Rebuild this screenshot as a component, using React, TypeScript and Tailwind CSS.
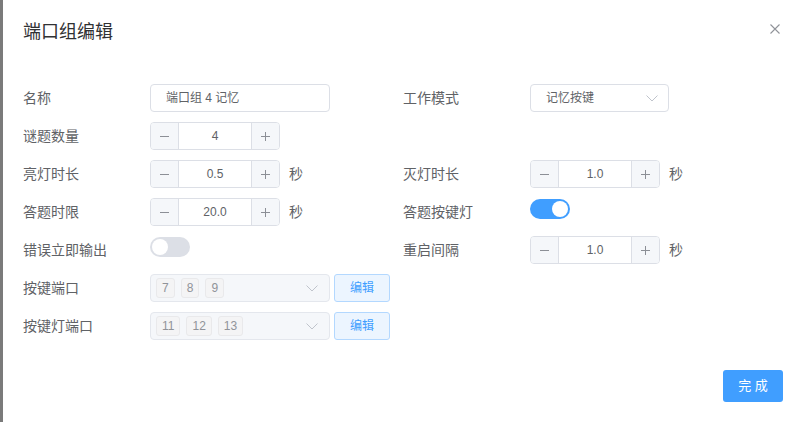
const Label = ({ children }: { children: React.ReactNode }) => (
  <div className="w-[127px] shrink-0 text-[14px] text-[#606266] leading-[28px]">{children}</div>
);

const NumberInput = ({ value }: { value: string }) => (
  <div className="flex h-[28px] w-[130px] rounded-[4px] border border-[#dcdfe6] overflow-hidden">
    <div className="w-[28px] shrink-0 bg-[#f5f7fa] border-r border-[#dcdfe6] flex items-center justify-center">
      <svg width="9" height="9" viewBox="0 0 9 9">
        <path d="M0 4.5h9" stroke="#8c8f96" strokeWidth="1" />
      </svg>
    </div>
    <div className="flex-1 flex items-center justify-center text-[12px] text-[#606266]">{value}</div>
    <div className="w-[28px] shrink-0 bg-[#f5f7fa] border-l border-[#dcdfe6] flex items-center justify-center">
      <svg width="9" height="9" viewBox="0 0 9 9">
        <path d="M0 4.5h9M4.5 0v9" stroke="#8c8f96" strokeWidth="1" />
      </svg>
    </div>
  </div>
);

const Unit = () => <span className="ml-[9px] text-[14px] text-[#606266]">秒</span>;

const Chevron = ({ color }: { color: string }) => (
  <svg width="12" height="7" viewBox="0 0 12 7" fill="none">
    <path d="M0.5 0.5L6 6L11.5 0.5" stroke={color} strokeWidth="1" />
  </svg>
);

const Switch = ({ on }: { on: boolean }) => (
  <div
    className={`mt-[1px] h-[20px] w-[40px] rounded-full p-[2px] flex ${
      on ? "bg-[#409eff] justify-end" : "bg-[#dcdfe6] justify-start"
    }`}
  >
    <div className="h-[16px] w-[16px] rounded-full bg-white" />
  </div>
);

const Tag = ({ n }: { n: string }) => (
  <span className="h-[20px] px-[5px] rounded-[3px] border border-[#e9e9eb] bg-[#f4f4f5] text-[12px] text-[#909399] flex items-center">
    {n}
  </span>
);

const PortSelect = ({ tags }: { tags: string[] }) => (
  <div className="flex items-center gap-[4px]">
    <div className="h-[28px] w-[180px] rounded-[4px] border border-[#e4e7ed] bg-[#f5f7fa] flex items-center pl-[5px] pr-[11px]">
      <div className="flex gap-[6px] flex-1">
        {tags.map((t) => (
          <Tag key={t} n={t} />
        ))}
      </div>
      <Chevron color="#c0c4cc" />
    </div>
    <button className="h-[28px] w-[56px] rounded-[3px] border border-[#b3d8ff] bg-[#ecf5ff] text-[12px] text-[#409eff]">
      编辑
    </button>
  </div>
);

const Row = ({ label, children }: { label?: string; children?: React.ReactNode }) => (
  <div className="flex items-start h-[28px]">
    {label ? <Label>{label}</Label> : null}
    <div className="flex items-center h-[28px]">{children}</div>
  </div>
);

export default function App() {
  return (
    <div className="w-[801px] h-[422px] flex font-['Liberation_Sans','Noto_Sans_CJK_SC',sans-serif] overflow-hidden">
      <div className="w-[3px] shrink-0 bg-[#7a7a7a]" />
      <div className="relative flex-1 bg-white flex flex-col">
        <div className="pt-[20px] pl-[20px] pb-[10px] text-[18px] leading-[24px] text-[#303133]">端口组编辑</div>
        <button className="absolute top-[24px] right-[21px]">
          <svg width="10" height="10" viewBox="0 0 10 10">
            <path d="M0.5 0.5L9.5 9.5M9.5 0.5L0.5 9.5" stroke="#909399" strokeWidth="1.1" />
          </svg>
        </button>

        <div className="pt-[30px] pl-[20px] grid grid-cols-[380px_380px] gap-y-[10px]">
          <Row label="名称">
            <div className="h-[28px] w-[180px] rounded-[4px] border border-[#dcdfe6] flex items-center px-[15px] text-[12px] text-[#606266]">
              端口组 4 记忆
            </div>
          </Row>
          <Row label="工作模式">
            <div className="h-[28px] w-[139px] rounded-[4px] border border-[#dcdfe6] flex items-center justify-between pl-[15px] pr-[10px] text-[12px] text-[#606266]">
              <span>记忆按键</span>
              <Chevron color="#c0c4cc" />
            </div>
          </Row>

          <Row label="谜题数量">
            <NumberInput value="4" />
          </Row>
          <Row />

          <Row label="亮灯时长">
            <NumberInput value="0.5" />
            <Unit />
          </Row>
          <Row label="灭灯时长">
            <NumberInput value="1.0" />
            <Unit />
          </Row>

          <Row label="答题时限">
            <NumberInput value="20.0" />
            <Unit />
          </Row>
          <div className="flex items-start h-[28px]">
            <Label>答题按键灯</Label>
            <Switch on />
          </div>

          <div className="flex items-start h-[28px]">
            <Label>错误立即输出</Label>
            <Switch on={false} />
          </div>
          <Row label="重启间隔">
            <NumberInput value="1.0" />
            <Unit />
          </Row>

          <Row label="按键端口">
            <PortSelect tags={["7", "8", "9"]} />
          </Row>
          <Row />

          <Row label="按键灯端口">
            <PortSelect tags={["11", "12", "13"]} />
          </Row>
          <Row />
        </div>

        <div className="mt-[30px] flex justify-end pr-[18px]">
          <button className="h-[32px] w-[60px] rounded-[3px] bg-[#409eff] text-[13px] text-white">完 成</button>
        </div>
      </div>
    </div>
  );
}
